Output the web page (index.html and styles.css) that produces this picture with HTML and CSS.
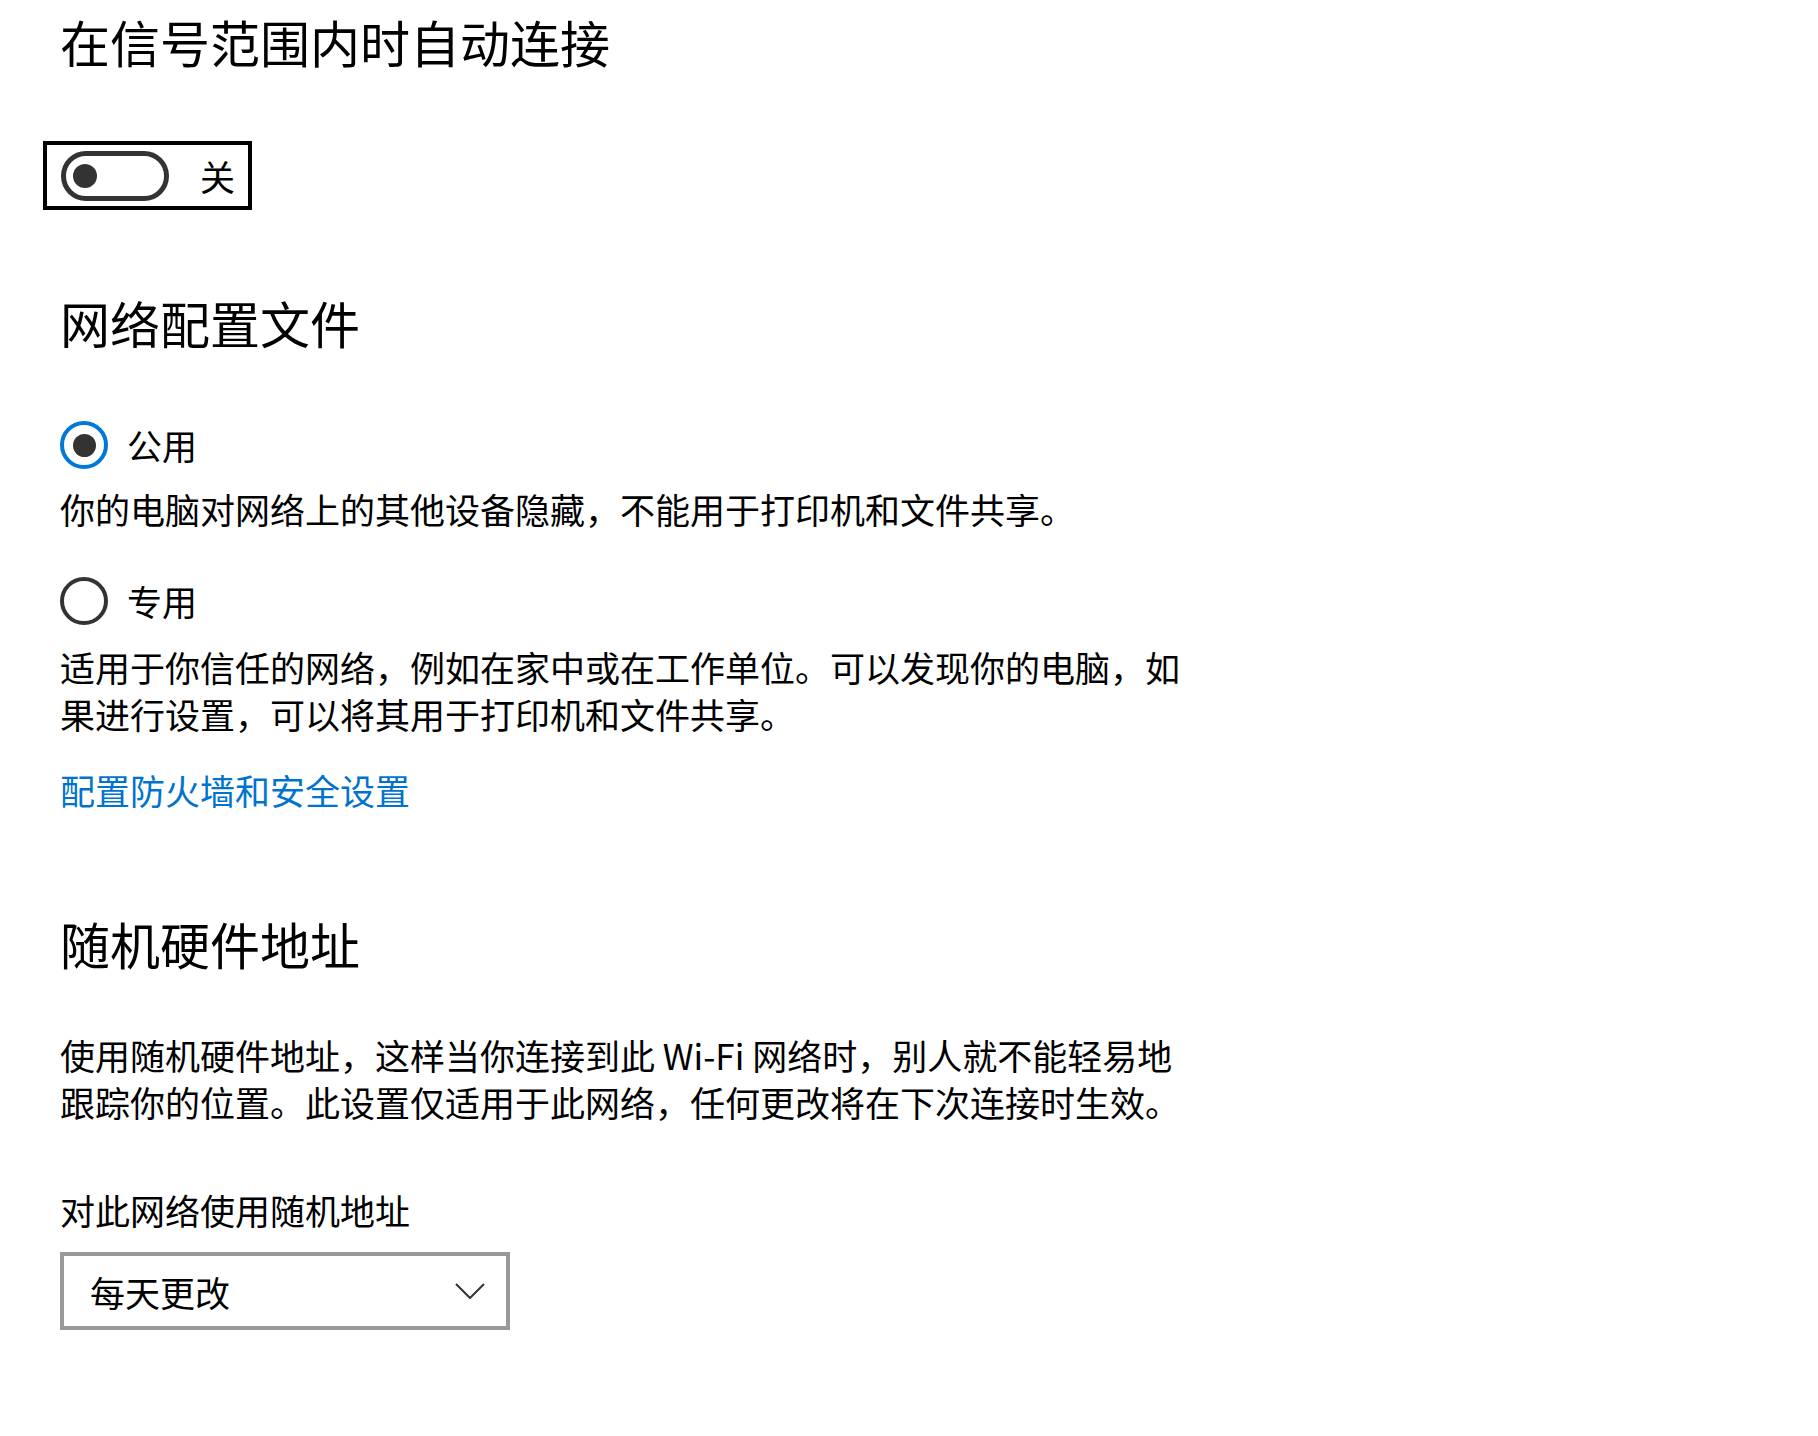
FILE: index.html
```html
<!DOCTYPE html>
<html lang="zh-CN">
<head>
<meta charset="utf-8">
<title>Wi-Fi 属性</title>
<link rel="stylesheet" href="styles.css">
</head>
<body>
<main class="page">
  <h1 class="title">在信号范围内时自动连接</h1>
  <div class="toggle-focus">
    <span class="toggle"><span class="knob"></span></span>
    <span class="toggle-label">关</span>
  </div>

  <h2 class="section">网络配置文件</h2>
  <div class="radio-row first">
    <span class="radio checked"></span>
    <span class="radio-label">公用</span>
  </div>
  <p class="desc">你的电脑对网络上的其他设备隐藏，不能用于打印机和文件共享。</p>
  <div class="radio-row second">
    <span class="radio"></span>
    <span class="radio-label">专用</span>
  </div>
  <p class="desc desc-private">适用于你信任的网络，例如在家中或在工作单位。可以发现你的电脑，如果进行设置，可以将其用于打印机和文件共享。</p>
  <a class="link" href="#">配置防火墙和安全设置</a>

  <h2 class="section section-mac">随机硬件地址</h2>
  <p class="desc desc-mac">使用随机硬件地址，这样当你连接到此 Wi-Fi 网络时，别人就不能轻易地跟踪你的位置。此设置仅适用于此网络，任何更改将在下次连接时生效。</p>
  <div class="field-label">对此网络使用随机地址</div>
  <div class="dropdown">
    <span class="dropdown-value">每天更改</span>
    <svg class="chevron" width="30" height="16" viewBox="0 0 30 16" aria-hidden="true">
      <polyline points="1,1 15,15 29,1" fill="none" stroke="#333" stroke-width="2"/>
    </svg>
  </div>
</main>
</body>
</html>
```

FILE: styles.css
```css
* { box-sizing: border-box; }

html, body {
  margin: 0;
  background: #fff;
}

.page {
  padding: 11px 0 40px 60px;
  font-family: "Noto Sans CJK SC", "Microsoft YaHei", sans-serif;
  color: #000;
}

.title {
  margin: 0;
  font-size: 50px;
  line-height: 60px;
  font-weight: 400;
}

.toggle-focus {
  margin: 70px 0 0 -17px;
  width: 209px;
  height: 69px;
  border: 4px solid #000;
  display: flex;
  align-items: center;
  padding-left: 14px;
}

.toggle {
  width: 108px;
  height: 50px;
  border: 5px solid #333;
  border-radius: 25px;
  display: flex;
  align-items: center;
  padding-left: 7px;
}

.knob {
  width: 24px;
  height: 24px;
  border-radius: 50%;
  background: #333;
}

.toggle-label {
  margin-left: 31px;
  font-size: 35px;
  line-height: 1;
}

.section {
  margin: 82px 0 0;
  font-size: 50px;
  line-height: 60px;
  font-weight: 400;
}

.radio-row {
  display: flex;
  align-items: center;
  gap: 19px;
  height: 48px;
}

.radio-row.first { margin-top: 69px; }
.radio-row.second { margin-top: 45px; }

.radio {
  width: 48px;
  height: 48px;
  border: 4px solid #333;
  border-radius: 50%;
  display: flex;
  align-items: center;
  justify-content: center;
}

.radio.checked { border-color: #0078d7; }

.radio.checked::after {
  content: "";
  width: 23px;
  height: 23px;
  border-radius: 50%;
  background: #333;
}

.radio-label {
  font-size: 35px;
  line-height: 48px;
}

.desc {
  margin: 16px 0 0;
  max-width: 1136px;
  font-size: 35px;
  line-height: 47px;
}

.desc-private { margin-top: 18px; }

.link {
  display: block;
  width: max-content;
  margin-top: 29px;
  font-size: 35px;
  line-height: 47px;
  color: #0073cf;
  text-decoration: none;
}

.section-mac { margin-top: 100px; }

.desc-mac { margin-top: 58px; }

.field-label {
  margin-top: 61px;
  font-size: 35px;
  line-height: 47px;
}

.dropdown {
  margin-top: 19px;
  width: 450px;
  height: 78px;
  border: 4px solid #999;
  display: flex;
  align-items: center;
  justify-content: space-between;
  padding: 0 21px 0 26px;
}

.dropdown-value {
  font-size: 35px;
  line-height: 47px;
}

.chevron { display: block; }
```
